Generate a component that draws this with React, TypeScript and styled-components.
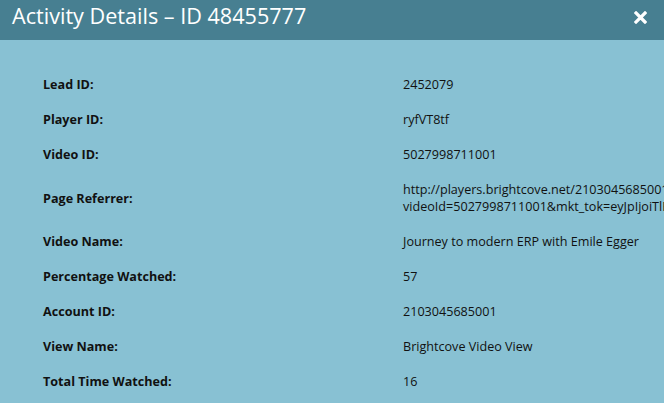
import React from 'react';
import styled, { createGlobalStyle } from 'styled-components';

const GlobalStyle = createGlobalStyle`
  html, body {
    margin: 0;
    padding: 0;
    background: #88c1d3;
    overflow: hidden;
  }
  body {
    font-family: "Open Sans", "Liberation Sans", sans-serif;
  }
`;

const Dialog = styled.div`
  width: 664px;
  height: 403px;
  background: #88c1d3;
  overflow: hidden;
`;

const TitleBar = styled.div`
  height: 40px;
  background: #477f91;
  display: flex;
  align-items: flex-start;
  justify-content: space-between;
  padding: 1px 17px 0 12px;
  box-sizing: border-box;
`;

const Title = styled.h2`
  margin: 0;
  font-size: 21.6px;
  font-weight: 400;
  color: #fff;
  white-space: nowrap;
`;

const CloseButton = styled.button`
  width: 14px;
  height: 14px;
  margin-top: 9px;
  padding: 0;
  border: none;
  background: none;
  display: flex;
  align-items: center;
  justify-content: center;
  cursor: pointer;
`;

const Body = styled.div`
  padding: 27px 0 0 43px;
`;

const Details = styled.div`
  display: grid;
  grid-template-columns: 360px max-content;
`;

const Label = styled.div`
  font-size: 12.6px;
  font-weight: 700;
  color: #111;
  line-height: 17px;
  padding: 9px 0;
  display: flex;
  align-items: center;
`;

const Value = styled.div`
  font-size: 12.6px;
  font-weight: 400;
  color: #111;
  line-height: 17px;
  padding: 9px 0;
  white-space: nowrap;
  display: flex;
  flex-direction: column;
  justify-content: center;
`;

const rows: [string, string[]][] = [
  ['Lead ID:', ['2452079']],
  ['Player ID:', ['ryfVT8tf']],
  ['Video ID:', ['5027998711001']],
  [
    'Page Referrer:',
    [
      'http://players.brightcove.net/2103045685001/default_default/index.html?',
      'videoId=5027998711001&mkt_tok=eyJpIjoiTlRjM01qZzFNekJrTlRZMyIsInQiOiJ',
    ],
  ],
  ['Video Name:', ['Journey to modern ERP with Emile Egger']],
  ['Percentage Watched:', ['57']],
  ['Account ID:', ['2103045685001']],
  ['View Name:', ['Brightcove Video View']],
  ['Total Time Watched:', ['16']],
];

const CloseIcon = () => (
  <svg width="13" height="13" viewBox="0 0 13 13">
    <path d="M2 2 L11 11 M11 2 L2 11" stroke="#fff" strokeWidth="3.2" strokeLinecap="square" />
  </svg>
);

export default function App() {
  return (
    <Dialog>
      <GlobalStyle />
      <TitleBar>
        <Title>Activity Details – ID 48455777</Title>
        <CloseButton aria-label="Close">
          <CloseIcon />
        </CloseButton>
      </TitleBar>
      <Body>
        <Details>
          {rows.map(([label, lines]) => (
            <React.Fragment key={label}>
              <Label>{label}</Label>
              <Value>
                {lines.map((l) => (
                  <span key={l}>{l}</span>
                ))}
              </Value>
            </React.Fragment>
          ))}
        </Details>
      </Body>
    </Dialog>
  );
}
